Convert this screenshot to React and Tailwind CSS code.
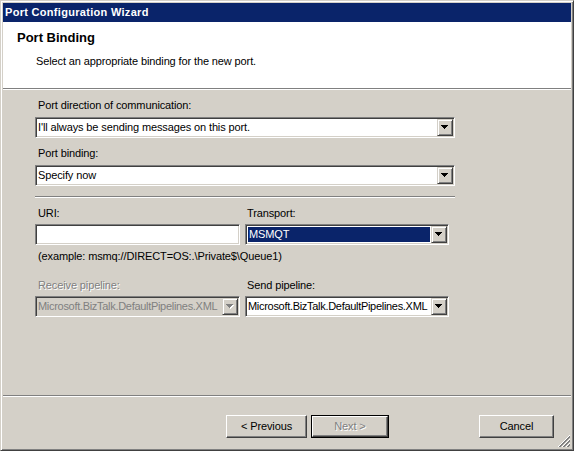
import React from "react";

const sunken =
  "border border-t-[#808080] border-l-[#808080] border-r-white border-b-white shadow-[inset_1px_1px_0_#404040,inset_-1px_-1px_0_#d4d0c8]";

// little black triangle used on the combo buttons
const Arrow = ({ disabled }) => (
  <svg width="8" height="5" viewBox="0 0 8 5" shapeRendering="crispEdges">
    {disabled && (
      <g fill="#ffffff">
        <rect x="1" y="1" width="7" height="1" />
        <rect x="2" y="2" width="5" height="1" />
        <rect x="3" y="3" width="3" height="1" />
        <rect x="4" y="4" width="1" height="1" />
      </g>
    )}
    <g fill={disabled ? "#808080" : "#000000"}>
      <rect x="0" y="0" width="7" height="1" />
      <rect x="1" y="1" width="5" height="1" />
      <rect x="2" y="2" width="3" height="1" />
      <rect x="3" y="3" width="1" height="1" />
    </g>
  </svg>
);

const Combo = ({ value, className = "", selected, disabled }) => (
  <div className={`${sunken} h-[21px] flex p-[1px] ${className}`}>
    <div
      className={`flex-1 min-w-0 flex items-center overflow-hidden whitespace-nowrap ${
        disabled ? "bg-[#d4d0c8] text-[#808080]" : "bg-white"
      }`}
    >
      {selected ? (
        <span className="ml-[1px] mr-[1px] h-[15px] flex-1 flex items-center bg-[#0a246a] text-white pl-[1px]">
          {value}
        </span>
      ) : (
        <span className="pl-[1px]">{value}</span>
      )}
    </div>
    <div className="w-[16px] h-full flex items-center justify-center bg-[#d4d0c8] border border-t-[#d4d0c8] border-l-[#d4d0c8] border-r-[#404040] border-b-[#404040] shadow-[inset_1px_1px_0_#fff,inset_-1px_-1px_0_#808080]">
      <Arrow disabled={disabled} />
    </div>
  </div>
);

const Button = ({ children, className = "", disabled, isDefault }) => {
  const face = (
    <div
      className={`w-full h-full flex items-center justify-center bg-[#d4d0c8] border border-t-white border-l-white border-r-[#404040] border-b-[#404040] shadow-[inset_-1px_-1px_0_#808080] ${
        disabled ? "text-[#808080] [text-shadow:1px_1px_0_#fff]" : ""
      }`}
    >
      {children}
    </div>
  );
  return isDefault ? (
    <div className={`h-[23px] border border-black ${className}`}>{face}</div>
  ) : (
    <div className={`h-[23px] ${className}`}>{face}</div>
  );
};

export default function App() {
  return (
    <div className="w-[574px] h-[451px] bg-[#d4d0c8] font-['Liberation_Sans',Arial,sans-serif] text-[11px] leading-[13px] tracking-[-0.12px] text-black select-none">
      <div className="relative w-full h-full border border-t-[#d4d0c8] border-l-[#d4d0c8] border-r-[#404040] border-b-[#404040] shadow-[inset_1px_1px_0_#fff,inset_-1px_-1px_0_#808080] p-[2px] flex flex-col">
        {/* title bar */}
        <div className="h-[19px] bg-[#0a246a] text-white font-bold tracking-[0.3px] flex items-center pl-[2px]">
          Port Configuration Wizard
        </div>

        {/* wizard header */}
        <div className="h-[66px] bg-white pt-[8px]">
          <div className="pl-[14px] text-[13px] leading-[15px] font-bold tracking-normal">Port Binding</div>
          <div className="pl-[33px] mt-[10px]">Select an appropriate binding for the new port.</div>
        </div>
        <div className="h-px bg-[#808080]" />
        <div className="h-px bg-white" />

        {/* body */}
        <div className="h-[305px] pl-[32px] pt-[9px] flex flex-col">
          <div className="ml-[3px]">Port direction of communication:</div>
          <Combo className="mt-[5px] w-[420px]" value="I'll always be sending messages on this port." />

          <div className="ml-[3px] mt-[9px]">Port binding:</div>
          <Combo className="mt-[5px] w-[420px]" value="Specify now" />

          <div className="mt-[10px] w-[420px]">
            <div className="h-px bg-[#808080]" />
            <div className="h-px bg-white" />
          </div>

          <div className="flex mt-[9px]">
            <div className="w-[210px] pl-[3px]">URI:</div>
            <div className="pl-[2px]">Transport:</div>
          </div>
          <div className="flex mt-[4px] gap-[5px]">
            <div className={`${sunken} h-[21px] w-[205px] bg-white`} />
            <Combo className="w-[204px]" value="MSMQT" selected />
          </div>
          <div className="ml-[3px] mt-[5px]">(example: msmq://DIRECT=OS:.\Private$\Queue1)</div>

          <div className="flex mt-[16px]">
            <div className="w-[210px] pl-[3px] text-[#808080] [text-shadow:1px_1px_0_#fff]">Receive pipeline:</div>
            <div className="pl-[2px]">Send pipeline:</div>
          </div>
          <div className="flex mt-[4px] gap-[5px] tracking-[-0.3px]">
            <Combo className="w-[205px]" value="Microsoft.BizTalk.DefaultPipelines.XML" disabled />
            <Combo className="w-[204px]" value="Microsoft.BizTalk.DefaultPipelines.XML" />
          </div>
        </div>

        <div className="h-px bg-[#808080]" />
        <div className="h-px bg-white" />

        {/* buttons */}
        <div className="flex-1 flex justify-end items-start pt-[18px] pr-[17px]">
          <Button className="w-[81px]">&lt; Previous</Button>
          <Button className="w-[78px] ml-[4px]" disabled isDefault>
            Next &gt;
          </Button>
          <Button className="w-[75px] ml-[90px]">Cancel</Button>
        </div>

        {/* size grip */}
        <svg
          className="absolute right-[3px] bottom-[3px]"
          width="12"
          height="12"
          viewBox="0 0 12 12"
          shapeRendering="crispEdges"
        >
          {[0, 4, 8].map((o) => (
            <g key={o}>
              <line x1={12} y1={o} x2={o} y2={12} stroke="#ffffff" strokeWidth="1" />
              <line x1={12} y1={o + 1} x2={o + 1} y2={12} stroke="#808080" strokeWidth="1" />
              <line x1={12} y1={o + 2} x2={o + 2} y2={12} stroke="#808080" strokeWidth="1" />
            </g>
          ))}
        </svg>
      </div>
    </div>
  );
}
